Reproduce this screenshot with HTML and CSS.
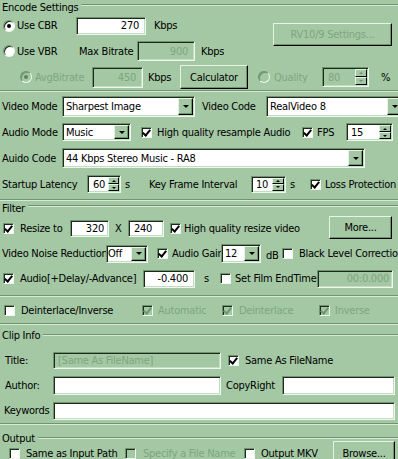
FILE: index.html
```html
<!DOCTYPE html>
<html lang="en">

<head>
    <meta charset="UTF-8" />
    <title>Encode Settings</title>
    <link rel="stylesheet" href="styles.css">
</head>

<body>
    <div class="head enc-head"><span>Encode Settings</span><span class="rule"></span></div>

    <div class="rate-top">
        <div class="rate-rows">
            <div class="row r-cbr">
                <span class="radio on"></span>
                <span class="use-lbl">Use CBR</span>
                <span class="field num cbr-in">270</span>
                <span class="kbps">Kbps</span>
            </div>
            <div class="row r-vbr">
                <span class="radio"></span>
                <span class="use-lbl">Use VBR</span>
                <span class="max-lbl">Max Bitrate</span>
                <span class="field num off max-in">900</span>
                <span class="kbps2">Kbps</span>
            </div>
        </div>
        <span class="btn off rv-btn">RV10/9 Settings...</span>
    </div>
    <div class="row r-avg">
        <span class="radio on off avg-radio"></span>
        <span class="dis avg-lbl">AvgBitrate</span>
        <span class="field num off avg-in">450</span>
        <span class="kbps3">Kbps</span>
        <span class="btn calc-btn">Calculator</span>
        <span class="radio off q-radio"></span>
        <span class="dis q-lbl">Quality</span>
        <span class="field spin off q-spin"><span class="val">80</span><span class="ud"><span class="up"></span><span class="dn"></span></span></span>
        <span class="pct">%</span>
    </div>
    <div class="sep enc-sep"></div>

    <div class="video">
        <div class="row">
            <span class="lbl-a">Video Mode</span>
            <span class="field select vm-sel"><span class="val">Sharpest Image</span><span class="drop"></span></span>
            <span class="vc-lbl">Video Code</span>
            <span class="field select vc-sel"><span class="val">RealVideo 8</span><span class="drop"></span></span>
        </div>
        <div class="row">
            <span class="lbl-a">Audio Mode</span>
            <span class="field select am-sel"><span class="val">Music</span><span class="drop"></span></span>
            <span class="check on hq-chk"></span>
            <span class="hq-lbl">High quality resample Audio</span>
            <span class="check on"></span>
            <span class="fps-lbl">FPS</span>
            <span class="field spin fps-spin"><span class="val">15</span><span class="ud"><span class="up"></span><span class="dn"></span></span></span>
        </div>
        <div class="row">
            <span class="lbl-a">Auido Code</span>
            <span class="field select ac-sel"><span class="val">44 Kbps Stereo Music - RA8</span><span class="drop"></span></span>
        </div>
        <div class="row">
            <span class="sl-lbl">Startup Latency</span>
            <span class="field spin sl-spin"><span class="val">60</span><span class="ud"><span class="up"></span><span class="dn"></span></span></span>
            <span class="s-lbl">s</span>
            <span class="kf-lbl">Key Frame Interval</span>
            <span class="field spin kf-spin"><span class="val">10</span><span class="ud"><span class="up"></span><span class="dn"></span></span></span>
            <span class="s-lbl2">s</span>
            <span class="check on"></span>
            <span class="lp-lbl">Loss Protection</span>
        </div>
    </div>
    <div class="sep video-sep"></div>

    <div class="head filter-head"><span>Filter</span><span class="rule"></span></div>
    <div class="filter">
        <div class="row">
            <span class="check on c3"></span>
            <span class="rs-lbl">Resize to</span>
            <span class="field num rs-w">320</span>
            <span class="x-lbl">X</span>
            <span class="field rs-h">240</span>
            <span class="check on hqv-chk"></span>
            <span class="hqv-lbl">High quality resize video</span>
            <span class="btn more-btn">More...</span>
        </div>
        <div class="row">
            <span class="vnr-lbl">Video Noise Reduction</span>
            <span class="field select vnr-sel"><span class="val">Off</span><span class="drop"></span></span>
            <span class="check on ag-chk"></span>
            <span class="ag-lbl">Audio Gain</span>
            <span class="field select ag-sel"><span class="val">12</span><span class="drop"></span></span>
            <span class="db-lbl">dB</span>
            <span class="check"></span>
            <span class="blc-lbl">Black Level Correction</span>
        </div>
        <div class="row">
            <span class="check on c3"></span>
            <span class="ad-lbl">Audio[+Delay/-Advance]</span>
            <span class="field num ad-in">-0.400</span>
            <span class="s-lbl3">s</span>
            <span class="check"></span>
            <span class="fe-lbl">Set Film EndTime</span>
            <span class="field num off fe-in">00:0.000</span>
        </div>
    </div>
    <div class="sep filter-sep"></div>

    <div class="row deint">
        <span class="check di-chk"></span>
        <span class="di-lbl">Deinterlace/Inverse</span>
        <span class="check on off"></span>
        <span class="dis auto-lbl">Automatic</span>
        <span class="check on off"></span>
        <span class="dis dil-lbl">Deinterlace</span>
        <span class="check on off"></span>
        <span class="dis inv-lbl">Inverse</span>
    </div>
    <div class="sep deint-sep"></div>

    <div class="head clip-head"><span>Clip Info</span><span class="rule"></span></div>
    <div class="clip">
        <div class="row">
            <span class="t-lbl">Title:</span>
            <span class="field off title-in">[Same As FileName]</span>
            <span class="check on same-chk"></span>
            <span class="same-lbl">Same As FileName</span>
        </div>
        <div class="row">
            <span class="t-lbl">Author:</span>
            <span class="field auth-in"></span>
            <span class="cr-lbl">CopyRight</span>
            <span class="field cr-in"></span>
        </div>
        <div class="row">
            <span class="k-lbl">Keywords</span>
            <span class="field kw-in"></span>
        </div>
    </div>
    <div class="sep"></div>

    <div class="head out-head"><span>Output</span><span class="rule"></span></div>
    <div class="row out-row">
        <span class="check sip-chk"></span>
        <span class="sip-lbl">Same as Input Path</span>
        <span class="check off"></span>
        <span class="dis sfn-lbl">Specify a File Name</span>
        <span class="check"></span>
        <span class="mkv-lbl">Output MKV</span>
        <span class="btn browse-btn">Browse...</span>
    </div>
</body>

</html>
```

FILE: styles.css
```css
* {
    box-sizing: border-box;
}

body {
    margin: 0;
    width: 398px;
    height: 459px;
    overflow: hidden;
    background: #a4c8a4;
    color: #000;
    font-family: "DejaVu Sans Condensed", "DejaVu Sans", sans-serif;
    font-size: 11px;
    letter-spacing: -0.25px;
}

/* group headers and separators */
.head {
    display: flex;
    align-items: center;
    height: 14px;
    padding-left: 2px;
}

.head .rule {
    flex: 1;
    margin-left: 3px;
    border-top: 1px solid #6f946f;
    border-bottom: 1px solid #d4e9d4;
}

.enc-head .rule,
.filter-head .rule {
    margin-bottom: 5px;
}

.sep {
    border-top: 1px solid #6f946f;
    border-bottom: 1px solid #d4e9d4;
}

.row {
    display: flex;
    align-items: center;
    white-space: nowrap;
    overflow: hidden;
}

.row > * {
    flex: none;
}

.dis {
    color: #7ea67e;
}

/* controls */
.field {
    display: flex;
    align-items: center;
    background: #fff;
    border: 1px solid;
    border-color: #6f946f #eef7ee #eef7ee #6f946f;
    box-shadow: inset 1px 1px #1c2a1c, inset -1px -1px #c2ddc2;
    padding: 0 4px;
    overflow: hidden;
}

.field.num {
    justify-content: flex-end;
    padding-right: 6px;
}

.field.off {
    background: #a4c8a4;
    color: #7ea67e;
}

.select {
    padding: 0 0 0 3px;
}

.select .val,
.spin .val {
    flex: 1;
    overflow: hidden;
}

.drop {
    align-self: stretch;
    width: 15px;
    margin: 1px;
    display: flex;
    align-items: center;
    justify-content: center;
    background: #a4c8a4;
    border: 1px solid;
    border-color: #e6f3e6 #000 #000 #e6f3e6;
    box-shadow: inset -1px -1px #6f946f;
}

.drop::after {
    content: "";
    border-left: 3px solid transparent;
    border-right: 3px solid transparent;
    border-top: 3px solid #000;
}

.spin {
    padding: 0 0 0 4px;
}

.ud {
    align-self: stretch;
    width: 12px;
    margin: 1px;
    display: flex;
    flex-direction: column;
}

.ud span {
    flex: 1;
    display: flex;
    align-items: center;
    justify-content: center;
    background: #a4c8a4;
    border: 1px solid;
    border-color: #e6f3e6 #000 #000 #e6f3e6;
}

.ud .up::after {
    content: "";
    border-left: 2px solid transparent;
    border-right: 2px solid transparent;
    border-bottom: 2px solid #000;
}

.ud .dn::after {
    content: "";
    border-left: 2px solid transparent;
    border-right: 2px solid transparent;
    border-top: 2px solid #000;
}

.spin.off .ud .up::after {
    border-bottom-color: #6f946f;
}

.spin.off .ud .dn::after {
    border-top-color: #6f946f;
}

.check {
    position: relative;
    width: 11px;
    height: 11px;
    background: #fff;
    border: 1px solid;
    border-color: #6f946f #eef7ee #eef7ee #6f946f;
    box-shadow: inset 1px 1px #1c2a1c;
}

.check.on::after {
    content: "";
    position: absolute;
    left: 2px;
    top: 0;
    width: 3px;
    height: 6px;
    border: solid #000;
    border-width: 0 2px 2px 0;
    transform: rotate(40deg);
}

.check.off {
    background: #a4c8a4;
}

.check.off::after {
    border-color: #6f946f;
}

.radio {
    position: relative;
    width: 12px;
    height: 12px;
    border-radius: 50%;
    background: #fff;
    border: 1px solid;
    border-color: #6f946f #eef7ee #eef7ee #6f946f;
    box-shadow: inset 1px 1px #1c2a1c;
}

.radio.on::after {
    content: "";
    position: absolute;
    left: 3px;
    top: 3px;
    width: 4px;
    height: 4px;
    border-radius: 50%;
    background: #000;
}

.radio.off {
    background: #a4c8a4;
    box-shadow: inset 1px 1px #6f946f;
}

.radio.off::after {
    background: #5f835f;
}

.btn {
    display: flex;
    align-items: center;
    justify-content: center;
    background: #a4c8a4;
    border: 1px solid;
    border-color: #e6f3e6 #000 #000 #e6f3e6;
    box-shadow: inset -1px -1px #6f946f;
}

.btn.off {
    color: #7ea67e;
}

/* encode settings */
.rate-top {
    display: flex;
}

.r-cbr {
    height: 23px;
}

.r-vbr {
    height: 28px;
}

.r-cbr .radio,
.r-vbr .radio {
    margin-left: 3px;
}

.use-lbl {
    margin-left: 2px;
    width: 59px;
}

.cbr-in {
    width: 70px;
    height: 18px;
}

.kbps {
    margin-left: 8px;
}

.max-lbl {
    margin-left: 3px;
    width: 58px;
}

.max-in {
    width: 58px;
    height: 20px;
}

.kbps2 {
    margin-left: 6px;
}

.rv-btn {
    margin: 9px 6px 0 auto;
    width: 119px;
    height: 23px;
}

.r-avg {
    height: 24px;
}

.avg-radio {
    margin-left: 20px;
}

.avg-lbl {
    margin-left: 3px;
    width: 57px;
}

.avg-in {
    width: 51px;
    height: 21px;
}

.kbps3 {
    margin-left: 5px;
    width: 32px;
}

.calc-btn {
    width: 68px;
    height: 24px;
}

.q-radio {
    margin-left: 10px;
}

.q-lbl {
    margin-left: 4px;
    width: 48px;
}

.q-spin {
    width: 47px;
    height: 20px;
    padding-left: 5px;
}

.pct {
    margin-left: 12px;
}

.enc-sep {
    margin-top: 1px;
}

/* video / audio */
.video {
    padding-top: 1px;
}

.video .row {
    height: 26px;
}

.lbl-a {
    margin-left: 2px;
    width: 60px;
}

.vm-sel {
    width: 133px;
    height: 21px;
}

.vc-lbl {
    margin-left: 7px;
    width: 64px;
}

.vc-sel {
    width: 138px;
    height: 21px;
}

.am-sel {
    width: 69px;
    height: 18px;
}

.hq-chk {
    margin-left: 10px;
}

.hq-lbl {
    margin-left: 5px;
    width: 145px;
}

.fps-lbl {
    margin-left: 4px;
    width: 29px;
}

.fps-spin {
    width: 47px;
    height: 18px;
}

.ac-sel {
    width: 303px;
    height: 20px;
}

.sl-lbl {
    margin-left: 2px;
    width: 85px;
}

.sl-spin {
    width: 34px;
    height: 18px;
    padding-left: 5px;
}

.sl-spin .val,
.kf-spin .val {
    flex: none;
    width: 15px;
}

.sl-spin .ud,
.kf-spin .ud {
    margin-left: auto;
}

.kf-spin {
    width: 35px;
    height: 17px;
    padding-left: 4px;
}

.s-lbl {
    margin-left: 4px;
    width: 24px;
}

.kf-lbl {
    width: 102px;
}

.s-lbl2 {
    margin-left: 4px;
    width: 20px;
}

.lp-lbl {
    margin-left: 4px;
}

.video-sep {
    margin-top: 2px;
}

/* filter */
.filter {
    padding-top: 1px;
}

.filter .row {
    height: 25px;
}

.c3 {
    margin-left: 3px;
}

.rs-lbl {
    margin-left: 6px;
    width: 50px;
}

.rs-w {
    width: 39px;
    height: 17px;
}

.field.rs-w {
    padding-right: 4px;
}

.x-lbl {
    margin-left: 6px;
    width: 13px;
}

.rs-h {
    width: 36px;
    height: 17px;
    padding-left: 5px;
}

.hqv-chk {
    margin-left: 6px;
}

.hqv-lbl {
    margin-left: 3px;
}

.more-btn {
    margin: 0 6px 3px auto;
    width: 63px;
    height: 23px;
}

.vnr-lbl {
    margin-left: 2px;
    width: 104px;
    overflow: hidden;
}

.vnr-sel {
    width: 42px;
    height: 18px;
}

.vnr-sel.select {
    padding-left: 1px;
}

.ag-chk {
    margin-left: 9px;
}

.ag-lbl {
    margin-left: 4px;
    width: 49px;
    overflow: hidden;
}

.ag-sel {
    width: 40px;
    height: 19px;
}

.db-lbl {
    margin-left: 5px;
    width: 16px;
    padding-top: 3px;
}

.blc-lbl {
    margin-left: 6px;
}

.ad-lbl {
    margin-left: 6px;
    width: 123px;
}

.ad-in {
    width: 52px;
    height: 18px;
}

.s-lbl3 {
    margin-left: 9px;
    width: 16px;
}

.fe-lbl {
    margin-left: 4px;
    width: 82px;
}

.fe-in {
    width: 76px;
    height: 18px;
}

.field.fe-in {
    padding-right: 3px;
}

.filter-sep {
    margin-top: 4px;
}

/* deinterlace */
.deint {
    margin-top: 3px;
    height: 20px;
}

.di-chk {
    margin-left: 4px;
}

.di-lbl {
    margin-left: 6px;
    width: 121px;
}

.auto-lbl {
    margin-left: 5px;
    width: 64px;
}

.dil-lbl {
    margin-left: 6px;
    width: 80px;
}

.inv-lbl {
    margin-left: 5px;
}

.deint-sep {
    margin-top: 3px;
}

/* clip info */
.clip-head {
    margin-top: 3px;
}

.clip {
    padding-top: 6px;
}

.clip .row {
    height: 25px;
}

.t-lbl {
    margin-left: 5px;
    width: 48px;
}

.k-lbl {
    margin-left: 4px;
    width: 49px;
}

.title-in {
    width: 168px;
    height: 17px;
}

.same-chk {
    margin-left: 7px;
}

.same-lbl {
    margin-left: 6px;
}

.auth-in {
    width: 168px;
    height: 19px;
}

.cr-lbl {
    margin-left: 2px;
    width: 59px;
    padding-left: 3px;
}

.cr-in {
    width: 113px;
    height: 19px;
}

.kw-in {
    width: 342px;
    height: 18px;
}

/* output */
.out-head {
    margin-top: 6px;
}

.out-row {
    margin-top: -4px;
    height: 24px;
    overflow: visible;
}

.sip-chk {
    margin-left: 9px;
}

.sip-lbl {
    margin-left: 6px;
    width: 99px;
}

.sfn-lbl {
    margin-left: 7px;
    width: 101px;
    overflow: hidden;
}

.mkv-lbl {
    margin-left: 6px;
    width: 72px;
}

.browse-btn {
    width: 62px;
    height: 24px;
}
```
